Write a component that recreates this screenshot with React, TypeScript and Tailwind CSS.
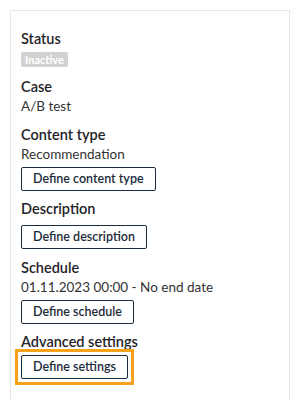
import React from 'react';

const Heading = ({ children }: { children: React.ReactNode }) => (
  <h3 className="text-[14.5px] leading-[19px] font-semibold text-[#1f2328]">{children}</h3>
);

const Value = ({ children }: { children: React.ReactNode }) => (
  <p className="text-[13.5px] leading-5 text-[#333]">{children}</p>
);

const DefineButton = ({ label }: { label: string }) => (
  <button className="block h-6 px-[11px] border border-[#1c2b3a] rounded-[2px] bg-white text-[12.5px] font-semibold text-[#1c2b3a] leading-none">
    {label}
  </button>
);

const App = () => {
  return (
    <div className="w-[300px] h-[400px] bg-white overflow-hidden font-['Lato',sans-serif]">
      <div className="mx-[10px] mt-[10px] h-[420px] border border-[#e6e6e6] px-[10px] pt-[18px]">
        {/* Status */}
        <Heading>Status</Heading>
        <span className="mt-1 flex w-fit h-[15px] items-center rounded-[2px] bg-[#d2d2d2] px-[4px] text-[11px] font-bold text-white leading-none">
          Inactive
        </span>

        {/* Case */}
        <div className="mt-[10px]">
          <Heading>Case</Heading>
          <Value>A/B test</Value>
        </div>

        {/* Content type */}
        <div className="mt-[9px]">
          <Heading>Content type</Heading>
          <Value>Recommendation</Value>
          <div className="mt-[3px]">
            <DefineButton label="Define content type" />
          </div>
        </div>

        {/* Description */}
        <div className="mt-[8px]">
          <Heading>Description</Heading>
          <div className="mt-[7px]">
            <DefineButton label="Define description" />
          </div>
        </div>

        {/* Schedule */}
        <div className="mt-[9px]">
          <Heading>Schedule</Heading>
          <Value>01.11.2023 00:00 - No end date</Value>
          <div className="mt-[3px]">
            <DefineButton label="Define schedule" />
          </div>
        </div>

        {/* Advanced settings */}
        <div className="mt-[8px]">
          <Heading>Advanced settings</Heading>
          <div className="mt-1 w-fit outline-[3px] outline-solid outline-[#f7a21b] outline-offset-[3px]">
            <DefineButton label="Define settings" />
          </div>
        </div>
      </div>
    </div>
  );
};

export default App;
